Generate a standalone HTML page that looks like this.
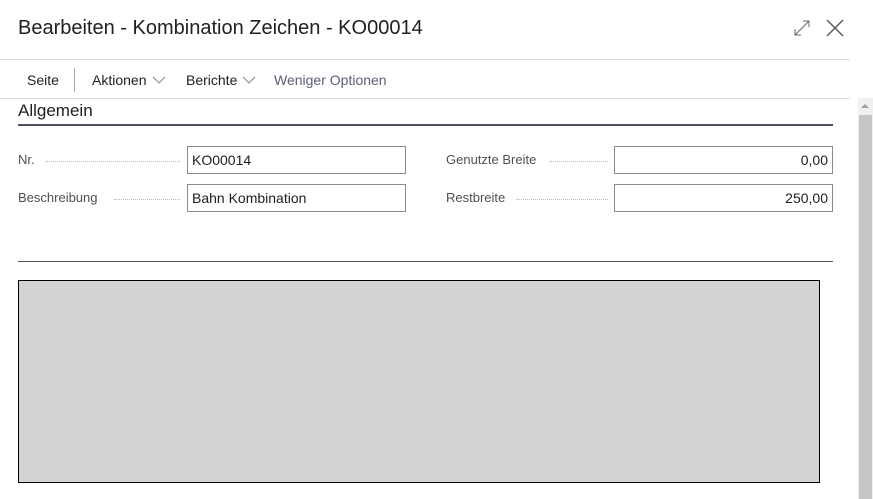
<!DOCTYPE html>
<html><head><style>
body{margin:0;width:873px;height:499px;background:#fff;font-family:"Liberation Sans",sans-serif;position:relative;overflow:hidden;color:#212121}
.a{position:absolute}
.lbl{font-size:13px;color:#505050}
.dots{border-bottom:1px dotted #bbb;height:0}
.box{border:1px solid #8a8a8a;box-sizing:border-box;height:28px;font-size:14px;line-height:26px;padding:0 4px;color:#212121}
</style></head><body>
<div class="a" style="left:18px;top:17px;font-size:20px;color:#212121">Bearbeiten - Kombination Zeichen - KO00014</div>
<svg class="a" style="left:792px;top:18px" width="20" height="20"><path d="M3 17L17 3M11 3h6v6M3 11v6h6" stroke="#666" fill="none" stroke-width="1"/></svg>
<svg class="a" style="left:825px;top:18px" width="20" height="20"><path d="M2 2L18 18M18 2L2 18" stroke="#555" fill="none" stroke-width="1.4"/></svg>
<div class="a" style="left:0;top:59px;width:850px;height:1px;background:#ddd"></div>
<div class="a" style="left:27px;top:72px;font-size:14px">Seite</div>
<div class="a" style="left:74px;top:68px;width:1px;height:24px;background:#aaa"></div>
<div class="a" style="left:92px;top:72px;font-size:14px">Aktionen</div>
<svg class="a" style="left:152px;top:76px" width="14" height="8"><path d="M1 1L7 7L13 1" stroke="#888" fill="none"/></svg>
<div class="a" style="left:186px;top:72px;font-size:14px">Berichte</div>
<svg class="a" style="left:242px;top:76px" width="14" height="8"><path d="M1 1L7 7L13 1" stroke="#888" fill="none"/></svg>
<div class="a" style="left:274px;top:72px;font-size:14px;color:#5a5f75">Weniger Optionen</div>
<div class="a" style="left:0;top:98px;width:850px;height:1px;background:#ddd"></div>
<div class="a" style="left:18px;top:101px;font-size:17px">Allgemein</div>
<div class="a" style="left:18px;top:124px;width:815px;height:2px;background:#505060"></div>
<div class="a lbl" style="left:18px;top:152px">Nr.</div>
<div class="a dots" style="left:46px;top:161px;width:134px"></div>
<div class="a box" style="left:187px;top:146px;width:219px">KO00014</div>
<div class="a lbl" style="left:18px;top:190px">Beschreibung</div>
<div class="a dots" style="left:114px;top:199px;width:66px"></div>
<div class="a box" style="left:187px;top:184px;width:219px">Bahn Kombination</div>
<div class="a lbl" style="left:446px;top:152px">Genutzte Breite</div>
<div class="a dots" style="left:550px;top:161px;width:58px"></div>
<div class="a box" style="left:614px;top:146px;width:219px;text-align:right">0,00</div>
<div class="a lbl" style="left:446px;top:190px">Restbreite</div>
<div class="a dots" style="left:516px;top:199px;width:92px"></div>
<div class="a box" style="left:614px;top:184px;width:219px;text-align:right">250,00</div>
<div class="a" style="left:18px;top:261px;width:815px;height:1px;background:#555"></div>
<div class="a" style="left:18px;top:280px;width:802px;height:203px;box-sizing:border-box;background:#d3d3d3;border:1px solid #000"></div>
<div class="a" style="left:858px;top:98px;width:15px;height:401px;background:#f0f0f0"></div>
<div class="a" style="left:861px;top:104px;width:0;height:0;border-left:4px solid transparent;border-right:4px solid transparent;border-bottom:4px solid #a0a0a0"></div>
<div class="a" style="left:859px;top:115px;width:13px;height:384px;background:#c6c6c6"></div>
</body></html>
